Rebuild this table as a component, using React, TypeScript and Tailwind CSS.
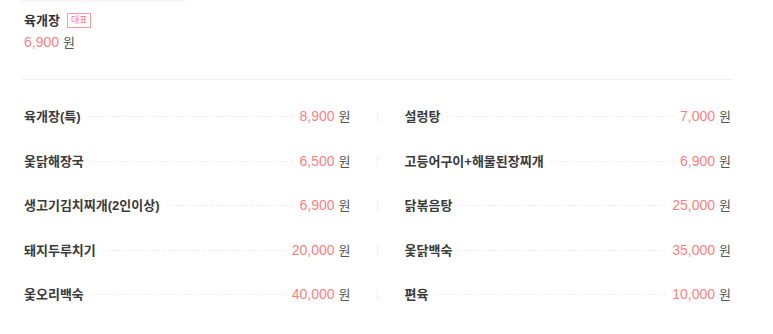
const MENU: { name: string; price: string }[] = [
  { name: '육개장(특)', price: '8,900' },
  { name: '설렁탕', price: '7,000' },
  { name: '옻닭해장국', price: '6,500' },
  { name: '고등어구이+해물된장찌개', price: '6,900' },
  { name: '생고기김치찌개(2인이상)', price: '6,900' },
  { name: '닭볶음탕', price: '25,000' },
  { name: '돼지두루치기', price: '20,000' },
  { name: '옻닭백숙', price: '35,000' },
  { name: '옻오리백숙', price: '40,000' },
  { name: '편육', price: '10,000' },
]

function MenuRow({ name, price, right }: { name: string; price: string; right: boolean }) {
  return (
    <div className="relative flex items-center h-[44.5px]">
      {right && (
        <span className="absolute left-[-28px] top-1/2 -translate-y-1/2 h-[11px] w-px bg-[#f0f0f0]" />
      )}
      <span className="text-[13px] font-semibold text-[#3a3a3a] whitespace-nowrap">{name}</span>
      <span className="flex-1 mx-[6px] border-t border-dashed border-[#eeeeee]" />
      <span className="text-[14px] text-[#ff8080] whitespace-nowrap">{price}</span>
      <span className="ml-[4px] text-[13px] text-[#555]">원</span>
    </div>
  )
}

export default function App() {
  return (
    <div
      className="w-[773px] h-[334px] bg-white overflow-hidden"
      style={{ fontFamily: '"Liberation Sans", "Noto Sans CJK KR", sans-serif' }}
    >
      <div className="ml-[22px] w-[163px] h-[2px] bg-[#f5f5f5]" />
      <div className="px-[24px] pt-[9px]">
        <div className="flex items-center gap-[7px]">
          <span className="text-[13px] font-bold text-[#333]">육개장</span>
          <span className="px-[3px] h-[15px] leading-[13px] border border-[#ff9a9a] text-[9px] text-[#ff7b7b]">
            대표
          </span>
        </div>
        <div className="mt-[1px] flex items-baseline">
          <span className="text-[14px] text-[#ff8080]">6,900</span>
          <span className="ml-[4px] text-[13px] text-[#555]">원</span>
        </div>
      </div>
      <div className="ml-[22px] mt-[26px] mr-[40px] h-px bg-[#f0f0f5]" />
      <div className="pl-[24px] pr-[42px] pt-[15px] grid grid-cols-2 gap-x-[54px]">
        {MENU.map((m, i) => (
          <MenuRow key={m.name} name={m.name} price={m.price} right={i % 2 === 1} />
        ))}
      </div>
    </div>
  )
}
